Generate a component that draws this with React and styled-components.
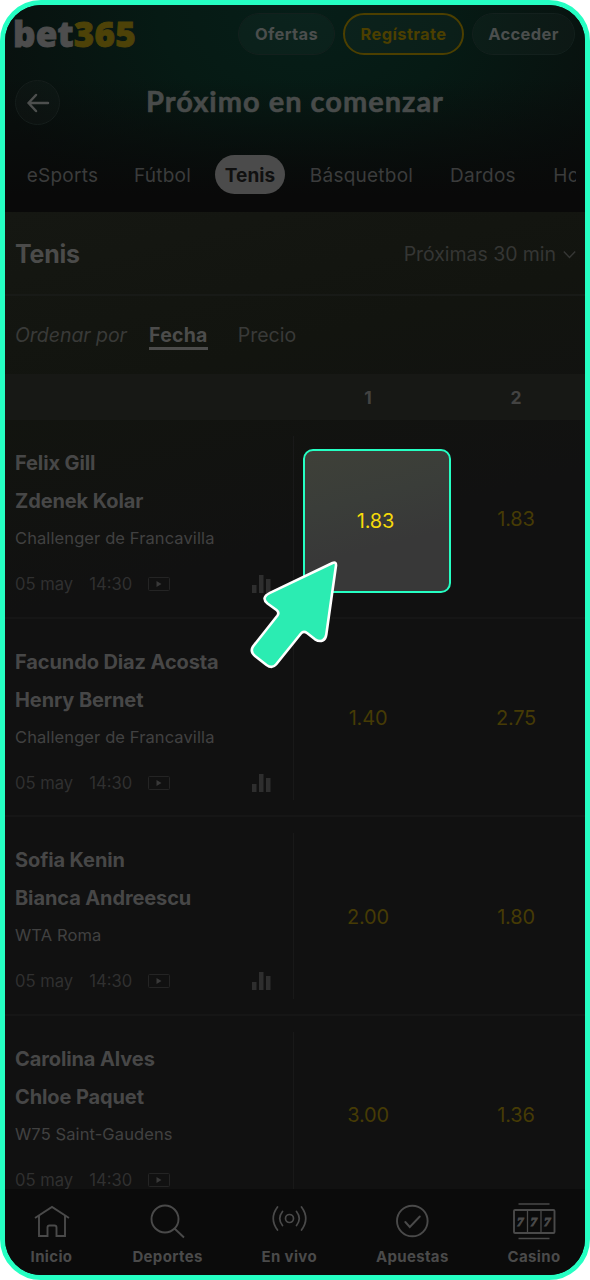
import React from "react";
import styled, { createGlobalStyle } from "styled-components";

const mint = "#25ffc3";

const GlobalStyle = createGlobalStyle`
  * { box-sizing: border-box; }
  body { margin: 0; background: #fff; font-family: Inter, "Liberation Sans", sans-serif; }
  h1, h2, p { margin: 0; }
  button { font: inherit; color: inherit; background: none; border: 0; padding: 0; }
`;

const Phone = styled.div`
  width: 590px;
  height: 1280px;
  border: 5px solid ${mint};
  border-radius: 41px;
  overflow: hidden;
  display: flex;
  flex-direction: column;
  background: #111111;
  color: #474747;
`;

const Header = styled.header`
  flex: none;
  height: 207px;
  background:
    linear-gradient(180deg, rgba(9, 9, 9, 0) 35%, #090909 92%),
    radial-gradient(ellipse 330px 260px at 52% 0, #061e18 0%, #061a14 45%, #09100e 100%);
`;

const TopBar = styled.div`
  display: flex;
  align-items: center;
  height: 58px;
  padding: 0 10px 0 8px;
  gap: 8px;
`;

const Logo = styled.div`
  flex: 1;
  font: 900 35px/36px "Noto Sans", "Open Sans", sans-serif;
  letter-spacing: 0.2px;
  -webkit-text-stroke: 0.9px currentColor;
  white-space: nowrap;
  color: #4d4d4d;
  span { color: #4d4208; }
`;

const PillButton = styled.button`
  width: ${(p) => p.$width}px;
  height: 42px;
  border-radius: 21px;
  border: ${(p) => (p.$gold ? "2px solid #4c3f00" : "1px solid #13201d")};
  background: rgba(255, 255, 255, 0.025);
  color: ${(p) => (p.$gold ? "#4c3f00" : "#4b4e4d")};
  font-size: 16.5px;
  font-weight: 700;
  letter-spacing: 0.35px;
`;

const TitleBar = styled.div`
  display: grid;
  grid-template-columns: 45px 1fr 45px;
  align-items: center;
  height: 78px;
  padding: 1px 10px 0;
`;

const BackButton = styled.button`
  width: 45px;
  height: 45px;
  border-radius: 50%;
  border: 1px solid #151d1b;
  background: rgba(255, 255, 255, 0.02);
  display: flex;
  align-items: center;
  justify-content: center;
  color: #4d4f4e;
`;

const PageTitle = styled.h1`
  font: 700 29px/40px Lato, sans-serif;
  letter-spacing: 1px;
  -webkit-text-stroke: 0.6px currentColor;
  padding-bottom: 3px;
  text-align: center;
  white-space: nowrap;
  color: #484b4a;
`;

const Tabs = styled.nav`
  display: flex;
  align-items: center;
  height: 66px;
  margin-right: 9px;
  padding: 0 0 0 12px;
  overflow: hidden;
`;

const Tab = styled.button`
  flex: none;
  width: ${(p) => p.$width}px;
  height: 39px;
  padding-top: 2px;
  margin-right: ${(p) => p.$after}px;
  border-radius: 20px;
  background: ${(p) => (p.$active ? "#4b4b4b" : "transparent")};
  color: ${(p) => (p.$active ? "#101010" : "#3b3c3c")};
  font-size: 19px;
  font-weight: ${(p) => (p.$active ? 700 : 400)};
  letter-spacing: ${(p) => (p.$active ? 0.1 : 0.25)}px;
  white-space: nowrap;
`;

const Board = styled.main`
  flex: 1;
  min-height: 0;
  overflow: hidden;
  background: linear-gradient(166deg, #151712 0%, #12140f 18%, #111111 36%);
`;

const SectionHead = styled.div`
  display: flex;
  align-items: center;
  justify-content: space-between;
  height: 84px;
  padding: 2px 9px 0 10px;
  border-bottom: 2px solid #181a17;
`;

const SectionTitle = styled.h2`
  font-size: 25px;
  font-weight: 700;
  letter-spacing: -0.25px;
  color: #4b4b4a;
`;

const Period = styled.button`
  display: flex;
  align-items: center;
  gap: 7px;
  font-size: 19.5px;
  letter-spacing: -0.05px;
  color: #353634;
`;

const SortBar = styled.div`
  display: flex;
  align-items: center;
  height: 78px;
  padding: 0 0 1px 10px;
  font-size: 19.5px;
  letter-spacing: -0.05px;
  color: #393a38;
`;

const SortLabel = styled.em`
  width: 134px;
`;

const SortOption = styled.button`
  margin-right: 30px;
  font-weight: ${(p) => (p.$active ? 700 : 400)};
  color: ${(p) => (p.$active ? "#4c4c4b" : "inherit")};
  line-height: 24px;
  letter-spacing: ${(p) => (p.$active ? 0.25 : 0)}px;
  box-shadow: ${(p) => (p.$active ? "0 3px 0 #4c4c4b" : "none")};
`;

const Columns = styled.div`
  display: grid;
  grid-template-columns: 289px 148px 148px;
  align-items: center;
`;

const ColumnHead = styled(Columns)`
  height: 46px;
  padding-top: 1px;
  background: #171815;
  font-size: 17.5px;
  font-weight: 700;
  text-align: center;
  color: #434342;
`;

const MatchRow = styled(Columns)`
  height: 198.7px;
  padding: 16px 0 15px;
  border-bottom: 2px solid #161616;
  align-items: stretch;
`;

const Info = styled.div`
  display: flex;
  flex-direction: column;
  padding: 8px 22px 0 10px;
  border-right: 1px solid #191919;
`;

const Player = styled.p`
  font-size: 20px;
  font-weight: 700;
  line-height: 38px;
  letter-spacing: -0.11px;
`;

const Tournament = styled.p`
  font-size: 16.5px;
  line-height: 37px;
  letter-spacing: 0.1px;
  color: #414141;
`;

const Meta = styled.div`
  display: flex;
  align-items: center;
  height: 24px;
  margin-top: 15px;
  gap: 16px;
  font-size: 16.6px;
  letter-spacing: 0;
  color: #303030;
`;

const StatsSlot = styled.span`
  display: flex;
  margin-left: auto;
`;

const Odd = styled.div`
  position: relative;
  display: flex;
  align-items: center;
  justify-content: center;
  padding-top: 1px;
  font-size: 20px;
  letter-spacing: -0.2px;
  color: #463b05;
`;

const Highlight = styled.div`
  position: absolute;
  top: 13px;
  left: 9px;
  width: 148px;
  height: 144px;
  display: flex;
  align-items: center;
  justify-content: center;
  padding-right: 3px;
  border: 2px solid ${mint};
  border-radius: 10px;
  background: linear-gradient(166deg, #3e4038 0%, #3a3d39 35%, #383838 65%);
  color: #f5d90a;
`;

const Pointer = styled.svg`
  position: absolute;
  top: 119px;
  left: -49px;
  z-index: 2;
`;

const BottomNav = styled.nav`
  flex: none;
  display: flex;
  justify-content: space-between;
  height: 86px;
  padding: 13px 24.5px 0 24.5px;
  background: #0b0b0b;
`;

const NavItem = styled.button`
  display: flex;
  flex-direction: column;
  align-items: center;
  font-size: 15px;
  font-weight: 700;
  letter-spacing: 0.35px;
  line-height: 20px;
  color: #4a4a4a;
  svg { margin-bottom: 6px; }
`;

const BackIcon = () => (
  <svg width="24" height="22" viewBox="0 0 24 22" fill="none" stroke="currentColor" strokeWidth="2.5" strokeLinecap="round" strokeLinejoin="round">
    <path d="M10 3 2.500 11l7.500 8M2.500 11h19.500" />
  </svg>
);

const ChevronIcon = () => (
  <svg width="13" height="9" viewBox="0 0 13 9" fill="none" stroke="currentColor" strokeWidth="1.4">
    <path d="m.8 1.5 5.7 6 5.7-6" />
  </svg>
);

const VideoIcon = () => (
  <svg width="22" height="14" viewBox="0 0 22 14">
    <rect x=".5" y=".5" width="21" height="13" rx="1" fill="none" stroke="#242424" />
    <path d="m8.5 4 5 3-5 3z" fill="#393939" />
  </svg>
);

const StatsIcon = () => (
  <svg width="19" height="18" viewBox="0 0 19 18" fill="#2e2e2e">
    <path d="M0 10h4.500v8H0zM7 0h4.500v18H7zM14 4h4.500v14H14z" />
  </svg>
);

const navIcon = { width: 44, height: 39, viewBox: "0 0 44 39", fill: "none", stroke: "currentColor", strokeWidth: 1.9 };

const HomeIcon = () => (
  <svg {...navIcon}>
    <path d="M5 16 22 5l17 11M9 13.500v20.500h8.500V25.500q0-2 2-2h5q2 0 2 2v8.500h8.500V13.500" />
  </svg>
);

const SearchIcon = () => (
  <svg {...navIcon}>
    <circle cx="19" cy="17" r="13.500" />
    <path d="m28.500 26.500 9.500 9" />
  </svg>
);

const LiveIcon = () => (
  <svg {...navIcon} strokeWidth="1.7" strokeLinecap="round">
    <circle cx="22.500" cy="16.500" r="4" />
    <path d="M15.500 9.500q-5.500 7 0 14M29.500 9.500q5.500 7 0 14M10.500 5q-8.500 11.500 0 23M34.500 5q8.500 11.500 0 23" />
  </svg>
);

const BetsIcon = () => (
  <svg {...navIcon} strokeLinecap="round">
    <circle cx="22.300" cy="19" r="15.300" />
    <path d="m15.300 20 4.500 5L29.800 14.500" />
  </svg>
);

const CasinoIcon = () => (
  <svg {...navIcon}>
    <path d="M6.500 2h31M6.500 36.500h31" strokeWidth="1.500" />
    <rect x="2" y="8" width="40.500" height="23" rx="1" />
    <path d="M15.500 8v23M29 8v23" strokeWidth="1.300" />
    <g fill="currentColor" stroke="currentColor" strokeWidth=".9" fontFamily="Liberation Serif, serif" fontWeight="700" fontStyle="italic" fontSize="13" textAnchor="middle">
      <text x="8.500" y="24">7</text>
      <text x="22" y="24">7</text>
      <text x="35.500" y="24">7</text>
    </g>
  </svg>
);

const PointerArrow = () => (
  <Pointer width="100" height="120" viewBox="0 0 100 120">
    <path
      d="M87.500 8 25 37.800C18.500 41 18 45 22.500 48.500L31.500 55Q34.700 57.500 32.300 60.800L8 91.500Q4.800 96.500 10 101L21.500 110Q27 114 31 109.500L56 78.500Q58.500 75.500 62 78L70 84.300C76 88 80.500 85.500 81.300 79.500L91 10.500Q91.300 6.500 87.500 8Z"
      fill="#2becb2"
      stroke="#fff"
      strokeWidth="2.600"
      strokeLinejoin="round"
    />
  </Pointer>
);

const tabs = [
  { label: "eSports", width: 91, after: 14.5 },
  { label: "Fútbol", width: 80, after: 12.5 },
  { label: "Tenis", width: 70, after: 15, active: true },
  { label: "Básquetbol", width: 123, after: 17 },
  { label: "Dardos", width: 86, after: 18 },
  { label: "Hockey", width: 88, after: 0 },
];

const matches = [
  { home: "Felix Gill", away: "Zdenek Kolar", event: "Challenger de Francavilla", odds: ["1.83", "1.83"], stats: true, picked: true },
  { home: "Facundo Diaz Acosta", away: "Henry Bernet", event: "Challenger de Francavilla", odds: ["1.40", "2.75"], stats: true },
  { home: "Sofia Kenin", away: "Bianca Andreescu", event: "WTA Roma", odds: ["2.00", "1.80"], stats: true },
  { home: "Carolina Alves", away: "Chloe Paquet", event: "W75 Saint-Gaudens", odds: ["3.00", "1.36"] },
];

const Match = ({ match }) => (
  <MatchRow>
    <Info>
      <Player>{match.home}</Player>
      <Player>{match.away}</Player>
      <Tournament>{match.event}</Tournament>
      <Meta>
        <span>05 may</span>
        <span>14:30</span>
        <VideoIcon />
        {match.stats && <StatsSlot><StatsIcon /></StatsSlot>}
      </Meta>
    </Info>
    <Odd>
      {match.picked ? (
        <>
          <Highlight>{match.odds[0]}</Highlight>
          <PointerArrow />
        </>
      ) : (
        match.odds[0]
      )}
    </Odd>
    <Odd>{match.odds[1]}</Odd>
  </MatchRow>
);

export default function App() {
  return (
    <>
      <GlobalStyle />
      <Phone>
        <Header>
          <TopBar>
            <Logo>bet<span>365</span></Logo>
            <PillButton $width={97}>Ofertas</PillButton>
            <PillButton $width={121} $gold>Regístrate</PillButton>
            <PillButton $width={103}>Acceder</PillButton>
          </TopBar>
          <TitleBar>
            <BackButton><BackIcon /></BackButton>
            <PageTitle>Próximo en comenzar</PageTitle>
          </TitleBar>
          <Tabs>
            {tabs.map((t) => (
              <Tab key={t.label} $width={t.width} $after={t.after} $active={t.active}>{t.label}</Tab>
            ))}
          </Tabs>
        </Header>
        <Board>
          <SectionHead>
            <SectionTitle>Tenis</SectionTitle>
            <Period>Próximas 30 min <ChevronIcon /></Period>
          </SectionHead>
          <SortBar>
            <SortLabel>Ordenar por</SortLabel>
            <SortOption $active>Fecha</SortOption>
            <SortOption>Precio</SortOption>
          </SortBar>
          <ColumnHead>
            <span />
            <span>1</span>
            <span>2</span>
          </ColumnHead>
          {matches.map((m) => <Match key={m.home} match={m} />)}
        </Board>
        <BottomNav>
          <NavItem><HomeIcon />Inicio</NavItem>
          <NavItem><SearchIcon />Deportes</NavItem>
          <NavItem><LiveIcon />En vivo</NavItem>
          <NavItem><BetsIcon />Apuestas</NavItem>
          <NavItem><CasinoIcon />Casino</NavItem>
        </BottomNav>
      </Phone>
    </>
  );
}
